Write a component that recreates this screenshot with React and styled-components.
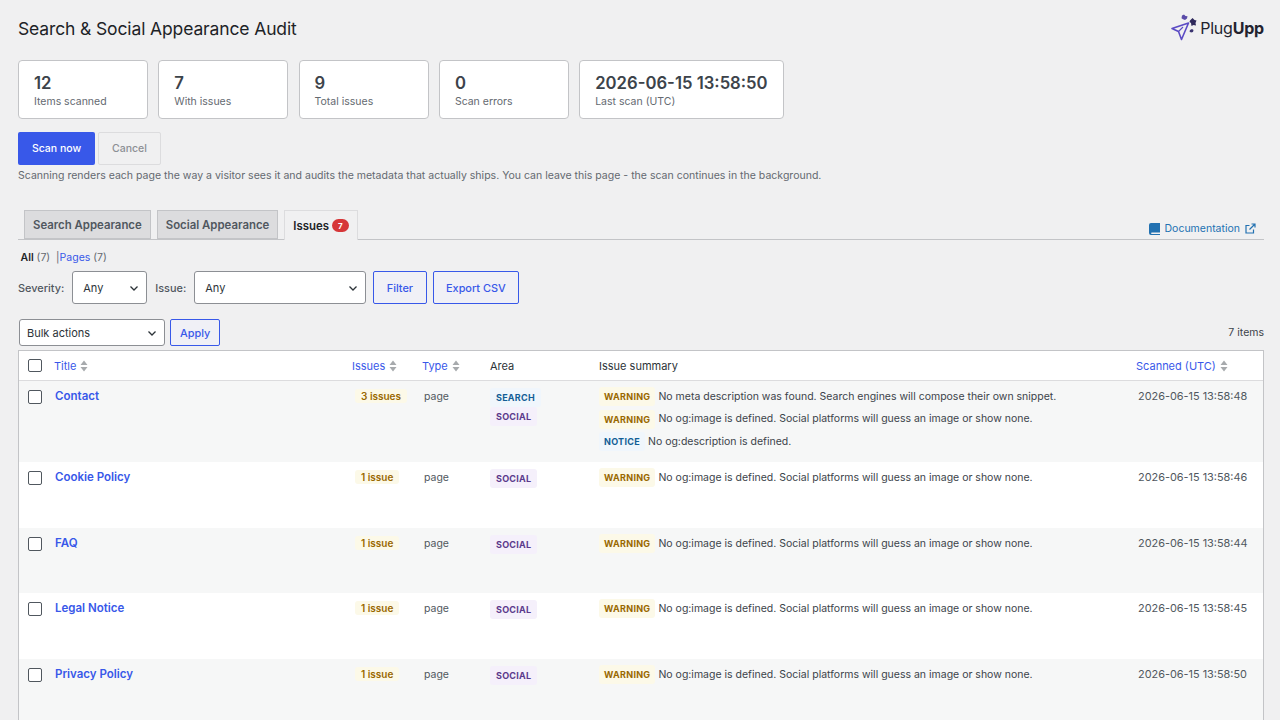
import styled, { createGlobalStyle } from 'styled-components'

const Global = createGlobalStyle`
  html, body {
    margin: 0;
    background: #f0f0f1;
    overflow: hidden;
    height: 720px;
  }
  body {
    font-family: Inter, 'Liberation Sans', sans-serif;
    font-size: 10.5px;
    color: #3c434a;
  }
  * { box-sizing: border-box; }
`

const Page = styled.div`
  padding: 0 16px 0 18px;
`

const Header = styled.header`
  display: flex;
  align-items: center;
  justify-content: space-between;
  height: 60px;
  padding: 0 0 4px 0;
`

const PageTitle = styled.h1`
  margin: 0;
  font-size: 17.5px;
  font-weight: 400;
  color: #1d2327;
  letter-spacing: -0.13px;
`

const Logo = styled.div`
  display: flex;
  align-items: center;
  gap: 1px;
  font-size: 16px;
  color: #23232f;
  letter-spacing: -0.2px;
  b { font-weight: 700; }
`

const Stats = styled.div`
  display: flex;
  gap: 10.3px;
`

const StatCard = styled.div`
  min-width: 130px;
  height: 59px;
  padding: 12px 15px 0;
  background: #fff;
  border: 1px solid #c3c4c7;
  border-radius: 4px;
`

const StatValue = styled.div`
  font-size: 16.7px;
  line-height: 20px;
  font-weight: 600;
  color: #3c434a;
`

const StatLabel = styled.div`
  margin-top: 2px;
  font-size: 10.5px;
  line-height: 14px;
  color: #646970;
`

const Actions = styled.div`
  display: flex;
  gap: 3px;
  margin-top: 13px;
`

const PrimaryButton = styled.button`
  width: 77px;
  height: 33px;
  border: 0;
  border-radius: 2px;
  background: #3858e9;
  color: #fff;
  font: 500 10.5px Inter, sans-serif;
`

const GhostButton = styled.button`
  width: 63px;
  height: 33px;
  border: 1px solid #dcdcde;
  border-radius: 2px;
  background: #f0f0f1;
  color: #8c8f94;
  font: 500 10.5px Inter, sans-serif;
`

const Note = styled.p`
  margin: 3px 0 0;
  font-size: 10.54px;
  line-height: 15px;
  color: #646970;
`

const TabBar = styled.div`
  display: flex;
  align-items: flex-end;
  gap: 6px;
  height: 30px;
  margin-top: 27px;
  padding-left: 6px;
  border-bottom: 1px solid #c3c4c7;
`

const Tab = styled.div`
  display: flex;
  align-items: center;
  gap: 3px;
  height: ${p => (p.$active ? '30px' : '29px')};
  margin-bottom: ${p => (p.$active ? '-1px' : '0')};
  padding: 0 8px;
  border: 1px solid ${p => (p.$active ? '#dcdcde' : '#c3c4c7')};
  border-bottom: ${p => (p.$active ? '0' : '1px solid #c3c4c7')};
  background: ${p => (p.$active ? '#f0f0f1' : '#dcdcde')};
  color: ${p => (p.$active ? '#1d2327' : '#50575e')};
  font-size: 11.4px;
  font-weight: 600;
`

const CountBubble = styled.span`
  display: inline-flex;
  align-items: center;
  justify-content: center;
  width: 17px;
  height: 13px;
  border-radius: 7px;
  background: #d63638;
  color: #fff;
  font-size: 8px;
  font-weight: 700;
`

const DocLink = styled.a`
  display: flex;
  align-items: center;
  gap: 5px;
  margin: 0 8px 4px auto;
  color: #2271b1;
  font-size: 10.5px;
`

const SubNav = styled.div`
  display: flex;
  align-items: center;
  height: 14px;
  margin: 10px 0 0 2.5px;
  font-size: 10.5px;
  color: #646970;
  b { color: #1d2327; font-weight: 600; }
  a { color: #3858e9; }
`

const FilterRow = styled.div`
  display: flex;
  align-items: center;
  height: 33px;
  margin-top: 7px;
`

const FieldLabel = styled.label`
  font-size: 10.9px;
  font-weight: 500;
  color: #50575e;
  margin-right: 8px;
`

const Select = styled.div`
  display: flex;
  align-items: center;
  justify-content: space-between;
  flex: none;
  width: ${p => p.$width}px;
  height: ${p => p.$height || 33}px;
  margin-right: ${p => p.$gap || 0}px;
  padding: 0 6px 0 ${p => p.$pad || 10}px;
  background: #fff;
  border: 1px solid #8c8f94;
  border-radius: 3px;
  color: #2c3338;
  font-size: 11px;
`

const OutlineButton = styled.button`
  height: ${p => p.$height || 33}px;
  padding: 0 ${p => p.$pad || 12.5}px;
  margin-right: ${p => p.$gap || 6}px;
  background: #f0f0f6;
  border: 1px solid #3858e9;
  border-radius: 2px;
  color: #3858e9;
  font: 500 10.9px Inter, sans-serif;
`

const BulkRow = styled.div`
  display: flex;
  align-items: center;
  height: 27px;
  margin: 15px 0 0 1px;
`

const ItemCount = styled.span`
  margin: -1px 0 0 auto;
  font-size: 10.5px;
  color: #3c434a;
`

const Table = styled.table`
  width: 1246px;
  margin-top: 4px;
  table-layout: fixed;
  border-collapse: separate;
  border-spacing: 0;
  background: #fff;
  border: 1px solid #c3c4c7;
  border-bottom: 0;
`

const HeadCell = styled.th`
  height: 30px;
  padding: 0 8px;
  text-align: left;
  font-size: 11px;
  font-weight: 400;
  color: #2c3338;
  border-bottom: 1px solid #dcdcde;
  a { color: #3858e9; }
`

const CheckHead = styled(HeadCell)`
  padding: 0 0 0 9px;
`

const Row = styled.tr`
  background: ${p => (p.$odd ? '#f6f7f7' : '#fff')};
  height: ${p => p.$height}px;
`

const Cell = styled.td`
  padding: 8px 8px 0;
  vertical-align: top;
  font-size: 11px;
  line-height: 14px;
  color: #50575e;
`

const TitleLink = styled.a`
  margin-left: 1px;
  font-size: 11.5px;
  font-weight: 600;
  color: #3858e9;
`

const CheckBox = styled.span`
  display: block;
  width: 13.5px;
  height: 13.5px;
  margin: ${p => (p.$head ? '0' : '1px')} 0 0 0;
  background: #fff;
  border: 1px solid #50575e;
  border-radius: 2px;
`

const CheckCell = styled(Cell)`
  padding: 8px 0 0 9px;
`

const CountPill = styled.span`
  display: inline-block;
  margin-left: 3px;
  padding: 0 6px;
  height: 14px;
  line-height: 14px;
  border-radius: 3px;
  background: #fcf9e8;
  color: #996800;
  font-size: 10px;
  font-weight: 600;
  white-space: nowrap;
`

const TypeText = styled.span`
  margin-left: 2px;
  font-size: 10.5px;
`

const AreaList = styled.div`
  display: flex;
  flex-direction: column;
  align-items: flex-start;
  margin-top: -1px;
`

const AreaTag = styled.span`
  display: block;
  height: 19px;
  line-height: 19px;
  padding: 0 6px;
  border-radius: 3px;
  background: ${p => (p.$kind === 'search' ? '#f0f6fc' : '#f5f0fb')};
  color: ${p => (p.$kind === 'search' ? '#135e96' : '#5b3a8c')};
  font-size: 9px;
  font-weight: 700;
  letter-spacing: 0.25px;
`

const IssueList = styled.div`
  margin-top: -3.5px;
`

const IssueLine = styled.div`
  display: flex;
  align-items: center;
  gap: 3px;
  height: 22.5px;
  font-size: 10.5px;
  color: #3c434a;
`

const SeverityTag = styled.span`
  height: 19px;
  line-height: 19px;
  padding: 0 5px;
  border-radius: 3px;
  background: ${p => (p.$kind === 'notice' ? '#f0f6fc' : '#fcf9e8')};
  color: ${p => (p.$kind === 'notice' ? '#135e96' : '#996800')};
  font-size: 9px;
  font-weight: 700;
  letter-spacing: 0.3px;
`

const DateCell = styled(Cell)`
  padding-left: 10px;
  font-size: 10.9px;
  color: #50575e;
`

const SortIcon = styled.svg`
  margin-left: 4px;
  vertical-align: -2px;
`

function SortArrows() {
  return (
    <SortIcon width="8" height="12" viewBox="0 0 8 12">
      <path d="M4 0.5 7.5 5H0.5Z M4 11.5 0.5 7H7.5Z" fill="#a7aaad" />
    </SortIcon>
  )
}

function Chevron() {
  return (
    <svg width="12" height="12" viewBox="0 0 12 12" fill="none">
      <path d="M2.5 4.5 6 8l3.5-3.5" stroke="#2c3338" strokeWidth="1.3" />
    </svg>
  )
}

function PlugUppMark() {
  return (
    <svg width="30" height="30" viewBox="0 0 30 30" fill="none">
      <path d="M3 15.500 19.500 10 12.500 26.500 9.500 18.500Z" stroke="#5b4bc4" strokeWidth="1.600" strokeLinejoin="round" />
      <path d="M9.500 18.500 14 14" stroke="#5b4bc4" strokeWidth="1.100" />
      <path d="M13 2.500l2-1 1.500 1.500 2 .3-.5 2.200-2 1.500-2-.8-1.500-1Z" fill="#5a4ba8" />
      <path d="M21 7.500l2.500-2.500 2 2 2 .5-1 2.500.5 2.500-2.500-.5-2 1-.5-3-1.500-1Z" fill="#2f2a5c" />
      <path d="M21 17l2-1 1.500 1-.5 2-2 .5-1.500-1Z" fill="#3a3470" />
    </svg>
  )
}

function BookIcon() {
  return (
    <svg width="11" height="12" viewBox="0 0 11 12">
      <path d="M2 0h9v9.500H2.500a1 1 0 0 0 0 1.500H11v1H2a2 2 0 0 1-2-2V2a2 2 0 0 1 2-2Z" fill="#2271b1" />
    </svg>
  )
}

function ExternalIcon() {
  return (
    <svg width="11" height="11" viewBox="0 0 11 11" fill="none" stroke="#2271b1" strokeWidth="1.200">
      <path d="M8.500 6.500V10H1V2.500h3.500" />
      <path d="M4.500 6.500 10 1M6.500 1H10v3.500" />
    </svg>
  )
}

const OG_IMAGE = 'No og:image is defined. Social platforms will guess an image or show none.'

const rows = [
  {
    title: 'Contact',
    count: '3 issues',
    areas: ['search', 'social'],
    issues: [
      ['warning', 'No meta description was found. Search engines will compose their own snippet.'],
      ['warning', OG_IMAGE],
      ['notice', 'No og:description is defined.'],
    ],
    date: '2026-06-15 13:58:48',
    height: 81,
  },
  { title: 'Cookie Policy', date: '2026-06-15 13:58:46', height: 66 },
  { title: 'FAQ', date: '2026-06-15 13:58:44', height: 65 },
  { title: 'Legal Notice', date: '2026-06-15 13:58:45', height: 66 },
  { title: 'Privacy Policy', date: '2026-06-15 13:58:50', height: 66 },
]

const stats = [
  ['12', 'Items scanned'],
  ['7', 'With issues'],
  ['9', 'Total issues'],
  ['0', 'Scan errors'],
  ['2026-06-15 13:58:50', 'Last scan (UTC)'],
]

export default function App() {
  return (
    <Page>
      <Global />
      <Header>
        <PageTitle>Search &amp; Social Appearance Audit</PageTitle>
        <Logo>
          <PlugUppMark />
          <span>Plug<b>Upp</b></span>
        </Logo>
      </Header>

      <Stats>
        {stats.map(([value, label]) => (
          <StatCard key={label}>
            <StatValue>{value}</StatValue>
            <StatLabel>{label}</StatLabel>
          </StatCard>
        ))}
      </Stats>

      <Actions>
        <PrimaryButton>Scan now</PrimaryButton>
        <GhostButton>Cancel</GhostButton>
      </Actions>
      <Note>
        Scanning renders each page the way a visitor sees it and audits the metadata that actually ships. You can leave this page - the scan continues in the background.
      </Note>

      <TabBar>
        <Tab>Search Appearance</Tab>
        <Tab>Social Appearance</Tab>
        <Tab $active>Issues <CountBubble>7</CountBubble></Tab>
        <DocLink>
          <BookIcon />
          Documentation
          <ExternalIcon />
        </DocLink>
      </TabBar>

      <SubNav>
        <b>All</b>&nbsp;(7)&nbsp;&nbsp;|<a>Pages</a>&nbsp;(7)
      </SubNav>

      <FilterRow>
        <FieldLabel>Severity:</FieldLabel>
        <Select $width={75} $gap={8}>Any <Chevron /></Select>
        <FieldLabel>Issue:</FieldLabel>
        <Select $width={172} $gap={7}>Any <Chevron /></Select>
        <OutlineButton>Filter</OutlineButton>
        <OutlineButton>Export CSV</OutlineButton>
      </FilterRow>

      <BulkRow>
        <Select $width={146} $height={27} $pad={7} $gap={5}>Bulk actions <Chevron /></Select>
        <OutlineButton $height={27} $pad={9}>Apply</OutlineButton>
        <ItemCount>7 items</ItemCount>
      </BulkRow>

      <Table>
        <colgroup>
          <col style={{ width: 27 }} />
          <col style={{ width: 298 }} />
          <col style={{ width: 70 }} />
          <col style={{ width: 68 }} />
          <col style={{ width: 109 }} />
          <col style={{ width: 537 }} />
          <col />
        </colgroup>
        <thead>
          <tr>
            <CheckHead><CheckBox $head /></CheckHead>
            <HeadCell><a>Title</a><SortArrows /></HeadCell>
            <HeadCell><a>Issues</a><SortArrows /></HeadCell>
            <HeadCell><a>Type</a><SortArrows /></HeadCell>
            <HeadCell>Area</HeadCell>
            <HeadCell>Issue summary</HeadCell>
            <HeadCell><a>Scanned (UTC)</a><SortArrows /></HeadCell>
          </tr>
        </thead>
        <tbody>
          {rows.map((row, i) => {
            const areas = row.areas || ['social']
            const issues = row.issues || [['warning', OG_IMAGE]]
            return (
              <Row key={row.title} $odd={i % 2 === 0} $height={row.height}>
                <CheckCell><CheckBox /></CheckCell>
                <Cell><TitleLink>{row.title}</TitleLink></Cell>
                <Cell><CountPill>{row.count || '1 issue'}</CountPill></Cell>
                <Cell><TypeText>page</TypeText></Cell>
                <Cell>
                  <AreaList>
                    {areas.map(a => <AreaTag key={a} $kind={a}>{a.toUpperCase()}</AreaTag>)}
                  </AreaList>
                </Cell>
                <Cell>
                  <IssueList>
                    {issues.map(([kind, text]) => (
                      <IssueLine key={text}>
                        <SeverityTag $kind={kind}>{kind.toUpperCase()}</SeverityTag>
                        {text}
                      </IssueLine>
                    ))}
                  </IssueList>
                </Cell>
                <DateCell>{row.date}</DateCell>
              </Row>
            )
          })}
        </tbody>
      </Table>
    </Page>
  )
}
